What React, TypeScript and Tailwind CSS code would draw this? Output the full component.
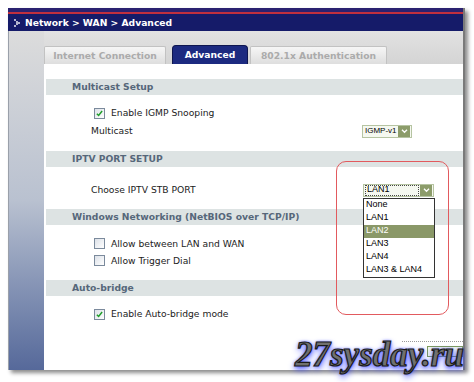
import type { ReactNode } from "react";

function Check({ checked }: { checked?: boolean }) {
  return (
    <span className="flex h-[11px] w-[11px] shrink-0 items-center justify-center border border-[#7b8a9c] bg-linear-to-br from-[#dce1e8] to-white">
      {checked ? (
        <svg viewBox="0 0 8 8" className="h-[7px] w-[7px]">
          <path d="M1 4.2l2 2 4-5" fill="none" stroke="#1f9e2a" strokeWidth="1.7" />
        </svg>
      ) : null}
    </span>
  );
}

function Arrow() {
  return (
    <span className="flex h-[11px] w-[12px] shrink-0 items-center justify-center bg-[#8c9c6a]">
      <svg viewBox="0 0 8 6" className="h-[5px] w-[7px]">
        <path d="M1 1l3 3 3-3" fill="none" stroke="#fff" strokeWidth="1.6" />
      </svg>
    </span>
  );
}

function Bar({ title }: { title: string }) {
  return (
    <div className="flex h-[16px] items-center bg-[#dde3e3] pl-[26px] text-[9.2px] font-bold text-[#56677a]">
      {title}
    </div>
  );
}

function CheckRow({ label, checked, h = "h-[18px]" }: { label: string; checked?: boolean; h?: string }) {
  return (
    <div className={`flex ${h} items-center gap-[6px] pl-[48px]`}>
      <Check checked={checked} />
      <span>{label}</span>
    </div>
  );
}

function Tab({ children, active, w }: { children: ReactNode; active?: boolean; w: string }) {
  return (
    <div
      className={
        active
          ? `flex h-[19px] ${w} items-center justify-center rounded-t-[4px] border border-b-0 border-[#0e1650] bg-[#1c2a80] text-white`
          : `flex h-[18px] ${w} items-center justify-center rounded-t-[2px] border border-b-0 border-[#c2c2c2] bg-linear-to-b from-[#f6f6f6] to-[#dedede] text-[#ababab]`
      }
    >
      {children}
    </div>
  );
}

const options = ["None", "LAN1", "LAN2", "LAN3", "LAN4", "LAN3 & LAN4"];

export default function App() {
  return (
    <div className="relative h-[382px] w-[474px] overflow-hidden bg-white pl-[8px] pt-[8px] font-['DejaVu_Sans',sans-serif] text-[9.2px] text-[#222]">
      <div className="flex h-[362px] w-[457px] flex-col border-r-2 border-[#7a7a7a] shadow-[3px_3px_4px_rgba(0,0,0,0.45)]">
        {/* title bar */}
        <div className="h-[4px] bg-[#2b2270]" />
        <div className="h-[2px] bg-[#c0303e]" />
        <div className="flex h-[17px] items-center gap-[5px] bg-[#151b69] pl-[6px] font-bold text-white">
          <svg viewBox="0 0 6 8" className="h-[8px] w-[6px]">
            <circle cx="1" cy="1" r="0.9" fill="#fff" />
            <circle cx="3" cy="3" r="0.9" fill="#fff" />
            <circle cx="5" cy="4" r="0.9" fill="#fff" />
            <circle cx="3" cy="5" r="0.9" fill="#fff" />
            <circle cx="1" cy="7" r="0.9" fill="#fff" />
          </svg>
          <span>Network &gt; WAN &gt; Advanced</span>
        </div>

        <div className="flex flex-1">
          <div className="w-[36px] border-l border-[#9aa0aa] bg-linear-to-b from-[#dcdcdc] via-[#b9c1d0] to-[#56699a]" />

          <div className="flex flex-1 flex-col">
            <div className="flex h-[33px] items-end gap-[6px] bg-linear-to-b from-[#e2e2e2] to-[#d4d4d4] font-bold">
              <Tab w="w-[122px]">Internet Connection</Tab>
              <div className="flex items-end gap-[2px]">
                <Tab w="w-[76px]" active>
                  Advanced
                </Tab>
                <Tab w="w-[137px]">802.1x Authentication</Tab>
              </div>
            </div>

            <div className="relative flex flex-1 flex-col bg-white pl-[2px]">
              <div className="mt-[15px]">
                <Bar title="Multicast Setup" />
                <div className="pt-[9px] pb-[11px]">
                  <CheckRow label="Enable IGMP Snooping" checked />
                  <div className="flex h-[18px] items-center pl-[45px]">
                    <span className="w-[271px]">Multicast</span>
                    <div className="flex h-[13px] w-[50px] items-center justify-between border border-[#b6c4a2] bg-[#f5f8f0] pl-[2px] pr-[1px] font-['Liberation_Sans',sans-serif] text-[8px] text-black">
                      <span>IGMP-v1</span>
                      <Arrow />
                    </div>
                  </div>
                </div>
              </div>

              <Bar title="IPTV PORT SETUP" />
              <div className="pt-[14px] pb-[10px]">
                <div className="flex h-[18px] items-center pl-[45px]">
                  <span className="w-[272px]">Choose IPTV STB PORT</span>
                  <div className="relative flex h-[13px] w-[71px] items-center border border-[#b6c4a2] bg-[#f5f8f0] pr-[1px] font-['Liberation_Sans',sans-serif] text-[9px] text-black">
                    <span className="mx-[1px] flex h-[11px] flex-1 items-center border border-dotted border-[#444] pl-[1px]">
                      LAN1
                    </span>
                    <Arrow />
                    <div className="absolute left-[-1px] top-[13px] z-10 w-[72px] border border-[#333] bg-white">
                      {options.map((o) => (
                        <div
                          key={o}
                          className={
                            o === "LAN2"
                              ? "flex h-[13px] items-center bg-[#8a9868] pl-[2px] text-white"
                              : "flex h-[13px] items-center pl-[2px]"
                          }
                        >
                          {o}
                        </div>
                      ))}
                    </div>
                  </div>
                </div>
              </div>

              <Bar title="Windows Networking (NetBIOS over TCP/IP)" />
              <div className="pt-[10px] pb-[11px]">
                <CheckRow label="Allow between LAN and WAN" h="h-[17px]" />
                <CheckRow label="Allow Trigger Dial" h="h-[17px]" />
              </div>

              <Bar title="Auto-bridge" />
              <div className="pt-[9px]">
                <CheckRow label="Enable Auto-bridge mode" checked />
              </div>

              <div className="ml-auto mt-[18px] w-[61px] border-t border-dotted border-[#9a9a9a]" />
              <div className="ml-auto mt-[4px] h-[11px] w-[36px] border border-[#7e9c5c] bg-[#f4f8ee]" />
            </div>
          </div>
        </div>
      </div>

      {/* annotation */}
      <div className="absolute left-[336px] top-[161px] h-[154px] w-[113px] rounded-[10px] border-[1.5px] border-[#e25a5e]" />

      {/* watermark */}
      <div className="absolute left-[295px] top-[337px] font-['Liberation_Serif',serif] text-[35px] font-bold italic leading-none text-[#707070] [-webkit-text-stroke:1.2px_#1a1a1a] [text-shadow:0_3px_6px_#2a36ff,0_0_3px_#3b44ff]">
        27sysday.ru
      </div>
    </div>
  );
}
